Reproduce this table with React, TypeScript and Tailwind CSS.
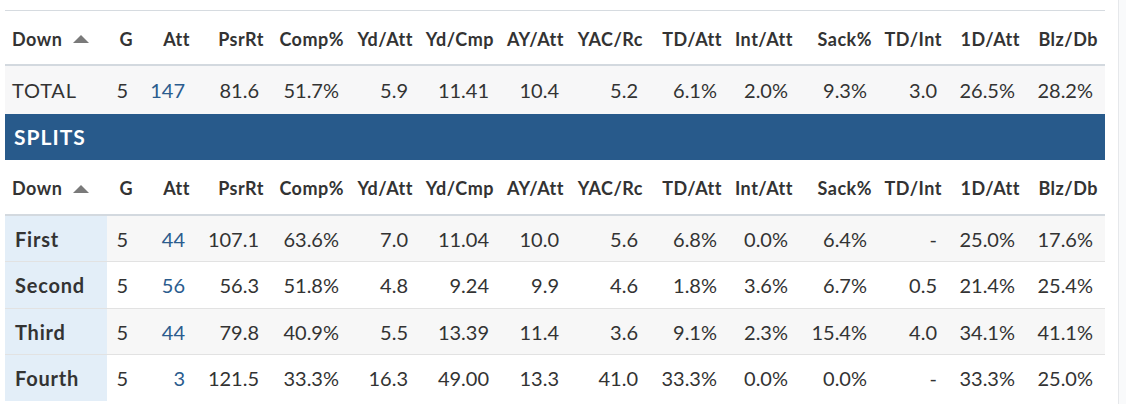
import React from "react";

const cols =
  "grid grid-cols-[102px_33px_57px_74px_80px_69px_81px_70px_79px_79px_71px_79px_70px_78px_78px]";

const headers = [
  "G",
  "Att",
  "PsrRt",
  "Comp%",
  "Yd/Att",
  "Yd/Cmp",
  "AY/Att",
  "YAC/Rc",
  "TD/Att",
  "Int/Att",
  "Sack%",
  "TD/Int",
  "1D/Att",
  "Blz/Db",
];

const total = ["5", "147", "81.6", "51.7%", "5.9", "11.41", "10.4", "5.2", "6.1%", "2.0%", "9.3%", "3.0", "26.5%", "28.2%"];

const splits = [
  { down: "First", h: "h-[46px]", vals: ["5", "44", "107.1", "63.6%", "7.0", "11.04", "10.0", "5.6", "6.8%", "0.0%", "6.4%", "-", "25.0%", "17.6%"] },
  { down: "Second", h: "h-[47px]", vals: ["5", "56", "56.3", "51.8%", "4.8", "9.24", "9.9", "4.6", "1.8%", "3.6%", "6.7%", "0.5", "21.4%", "25.4%"] },
  { down: "Third", h: "h-[46px]", vals: ["5", "44", "79.8", "40.9%", "5.5", "13.39", "11.4", "3.6", "9.1%", "2.3%", "15.4%", "4.0", "34.1%", "41.1%"] },
  { down: "Fourth", h: "h-[46px]", vals: ["5", "3", "121.5", "33.3%", "16.3", "49.00", "13.3", "41.0", "33.3%", "0.0%", "0.0%", "-", "33.3%", "25.0%"] },
];

function HeaderRow({ top }: { top?: boolean }) {
  return (
    <div
      className={`${cols} h-[56px] items-center border-b-2 border-[#d3d9df] text-[18px] font-bold tracking-[0.5px] text-[#333] ${
        top ? "border-t border-t-[#d6dbe0]" : ""
      }`}
    >
      <div className="flex items-center pl-[7px] pt-[3px]">
        <span>Down</span>
        <svg className="ml-[11px]" width="16" height="8" viewBox="0 0 16 8">
          <polygon points="8,0 16,8 0,8" fill="#7a7a7a" />
        </svg>
      </div>
      {headers.map((h) => (
        <div key={h} className="pr-[7px] pt-[3px] text-right">
          {h}
        </div>
      ))}
    </div>
  );
}

function Cells({ vals }: { vals: string[] }) {
  return (
    <>
      {vals.map((v, i) => (
        <div key={i} className={`pr-3 text-right ${i === 1 ? "text-[#2b5c8e]" : ""}`}>
          {v}
        </div>
      ))}
    </>
  );
}

export default function App() {
  return (
    <div className="flex h-[404px] overflow-hidden bg-white font-['Lato','Liberation_Sans',sans-serif] text-[#333]">
      <div className="w-[1118px] shrink-0 pl-[5px] pt-[10px]">
        <div className="w-[1100px] text-[20px]">
          <HeaderRow top />
          <div className={`${cols} h-[48px] items-center bg-[#f7f7f8]`}>
            <div className="pl-[7px] tracking-[0.8px]">TOTAL</div>
            <Cells vals={total} />
          </div>
          <div className="flex h-[46px] items-center bg-[#285a8b] pl-[9px] text-[21px] font-bold tracking-[1px] text-white">
            SPLITS
          </div>
          <HeaderRow />
          {splits.map((r, idx) => (
            <div
              key={r.down}
              className={`${cols} ${r.h} items-center ${idx < splits.length - 1 ? "border-b border-[#e2e2e2]" : ""} ${
                idx % 2 === 0 ? "bg-[#f7f7f7]" : "bg-white"
              }`}
            >
              <div className="flex h-full items-center bg-[#e3eef8] pl-[10px] font-bold tracking-[0.8px]">{r.down}</div>
              <Cells vals={r.vals} />
            </div>
          ))}
        </div>
      </div>
      <div className="flex-1 border-l border-[#e6e8eb] bg-[#f9fafb]" />
    </div>
  );
}
